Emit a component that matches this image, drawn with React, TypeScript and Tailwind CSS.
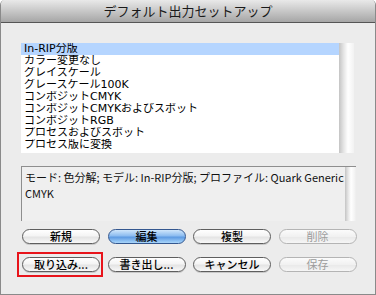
import React from "react"

const items = [
  "In-RIP分版",
  "カラー変更なし",
  "グレイスケール",
  "グレースケール100K",
  "コンポジットCMYK",
  "コンポジットCMYKおよびスポット",
  "コンポジットRGB",
  "プロセスおよびスポット",
  "プロセス版に変換",
]

const font = { fontFamily: '"Noto Sans CJK JP", "DejaVu Sans", sans-serif' }
const listFont = { fontFamily: '"DejaVu Sans", "Noto Sans CJK JP", sans-serif' }

function Scrollbar({ className }: { className: string }) {
  return (
    <div
      className={`shrink-0 bg-[linear-gradient(to_right,#c4c4c4_0%,#e4e4e4_30%,#ffffff_60%,#f2f2f2_100%)] ${className}`}
    />
  )
}

type ButtonProps = {
  label: string
  variant?: "normal" | "default" | "disabled"
}

function AquaButton({ label, variant = "normal" }: ButtonProps) {
  if (variant === "default") {
    return (
      <button
        type="button"
        className="flex h-[15px] w-[78px] items-center justify-center rounded-full border border-[#34578f] bg-[linear-gradient(to_bottom,#cfe6fb_0%,#8cbcf0_45%,#5d9ae2_55%,#a9d6fb_100%)] text-[11px] font-medium leading-none text-black"
      >
        {label}
      </button>
    )
  }
  if (variant === "disabled") {
    return (
      <button
        type="button"
        disabled
        className="flex h-[15px] w-[78px] items-center justify-center rounded-full border border-[#b4b4b4] bg-[linear-gradient(to_bottom,#fbfbfb_0%,#f1f1f1_50%,#e9e9e9_55%,#f6f6f6_100%)] text-[11px] leading-none text-[#9c9c9c]"
      >
        {label}
      </button>
    )
  }
  return (
    <button
      type="button"
      className="flex h-[15px] w-[78px] items-center justify-center rounded-full border border-[#5e5e5e] bg-[linear-gradient(to_bottom,#ffffff_0%,#f4f4f4_45%,#e4e4e4_55%,#f8f8f8_100%)] text-[11px] font-medium leading-none text-black shadow-[0_1px_0_rgba(0,0,0,0.15)]"
    >
      {label}
    </button>
  )
}

export default function App() {
  return (
    <div
      className="flex h-[295px] w-[376px] flex-col overflow-hidden rounded-t-[5px] border-x border-b border-[#8a8a8a] bg-[#ececec]"
      style={font}
    >
      <div className="flex h-[23px] shrink-0 items-center justify-center border-b border-[#555555] bg-[linear-gradient(to_bottom,#e9e9e9,#a6a6a6)] text-[13px] text-[#1a1a1a]">
        デフォルト出力セットアップ
      </div>

      <div className="flex flex-col pl-[20px] pt-[20px]">
        <div className="flex h-[110px] w-[333px]" style={listFont}>
          <div className="flex-1 bg-white">
            {items.map((item, i) => (
              <div
                key={item}
                className={`h-[12px] overflow-hidden pl-[3px] text-[11px] leading-[12px] text-black ${i === 0 ? "bg-[#b5d5ff]" : ""}`}
              >
                {item}
              </div>
            ))}
          </div>
          <Scrollbar className="w-[15px]" />
        </div>

        <div className="mt-[13px] flex h-[55px] w-[335px] border-l border-t border-[#8e8e8e] bg-[#efefef] pr-px">
          <div className="flex-1 pl-[3px] pt-[2px] text-[11px] leading-[16px] text-[#111]">
            モード: 色分解; モデル: In-RIP分版; プロファイル: Quark Generic CMYK
          </div>
          <Scrollbar className="w-[10px]" />
        </div>

        <div className="mt-[8px] grid w-[336px] grid-cols-4 gap-x-[7px] gap-y-[13px] pl-px">
          <AquaButton label="新規" />
          <AquaButton label="編集" variant="default" />
          <AquaButton label="複製" />
          <AquaButton label="削除" variant="disabled" />
          <div className="relative">
            <AquaButton label="取り込み..." />
            <div className="pointer-events-none absolute left-[-5px] top-[-5px] h-[25px] w-[86px] border-2 border-[#e8141b]" />
          </div>
          <AquaButton label="書き出し..." />
          <AquaButton label="キャンセル" />
          <AquaButton label="保存" variant="disabled" />
        </div>
      </div>
    </div>
  )
}
